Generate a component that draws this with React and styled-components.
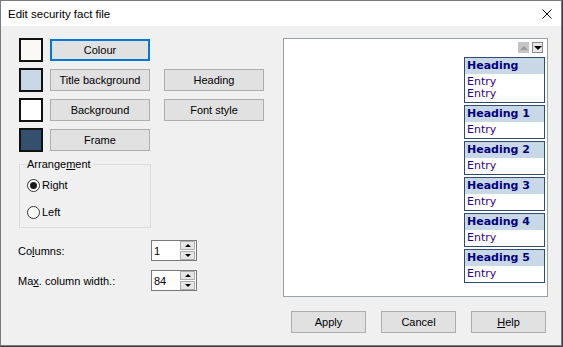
import React from 'react';
import styled, { createGlobalStyle } from 'styled-components';

const GlobalStyle = createGlobalStyle`
  html, body {
    margin: 0;
    padding: 0;
    background: #3a3d48;
  }
  body {
    font-family: "Liberation Sans", Arial, sans-serif;
    font-size: 11px;
    color: #000;
  }
`;

const Window = styled.div`
  width: 560px;
  height: 344px;
  border: 1px solid #7b7b7b;
  background: #f0f0f0;
  display: flex;
  flex-direction: column;
`;

const TitleBar = styled.div`
  height: 25px;
  flex: none;
  background: #fff;
  display: flex;
  align-items: center;
  justify-content: space-between;
  padding: 0 9px 0 7px;
  font-size: 11.5px;
`;

const CloseIcon = () => (
  <svg width="10" height="10" viewBox="0 0 10 10">
    <path d="M0.5 0.5 L9.5 9.5 M9.5 0.5 L0.5 9.5" stroke="#111" strokeWidth="1" />
  </svg>
);

const Body = styled.div`
  flex: 1;
  display: flex;
  padding: 12px 0 0 18px;
`;

const LeftCol = styled.div`
  width: 246px;
  display: flex;
  flex-direction: column;
`;

const RightCol = styled.div`
  width: 265px;
  margin-left: 18px;
  display: flex;
  flex-direction: column;
`;

const SwatchRows = styled.div`
  display: flex;
  flex-direction: column;
  gap: 6px;
`;

const SwatchRow = styled.div`
  display: flex;
  align-items: center;
  height: 24px;
`;

const Swatch = styled.div`
  width: 24px;
  height: 24px;
  box-sizing: border-box;
  border: 2px solid #111;
  background: ${({ color }) => color};
  margin-right: 7px;
`;

const Button = styled.button`
  width: ${({ wide }) => (wide ? '100px' : '75px')};
  height: 22px;
  box-sizing: border-box;
  padding: 0;
  margin: 0;
  margin-left: ${({ gapLeft }) => gapLeft || 0}px;
  background: #e1e1e1;
  border: ${({ focused }) => (focused ? '2px solid #0078d7' : '1px solid #adadad')};
  font-family: "Liberation Sans", Arial, sans-serif;
  font-size: 11px;
  color: #000;
`;

const Group = styled.fieldset`
  margin: 6px 0 0 0;
  width: 132px;
  box-sizing: border-box;
  padding: 0 0 7px 7px;
  border: 1px solid #dcdcdc;
`;

const Legend = styled.legend`
  padding: 0 2px 0 0;
  line-height: 13px;
`;

const RadioList = styled.div`
  display: flex;
  flex-direction: column;
  gap: 11px;
  padding-top: 6px;
`;

const RadioRow = styled.label`
  display: flex;
  align-items: center;
  height: 16px;
  gap: 2px;
`;

const RadioCircle = styled.span`
  width: 13px;
  height: 13px;
  box-sizing: border-box;
  border-radius: 50%;
  border: 1px solid #333;
  background: #fff;
  display: flex;
  align-items: center;
  justify-content: center;

  &::after {
    content: '';
    width: 7px;
    height: 7px;
    border-radius: 50%;
    background: ${({ checked }) => (checked ? '#1a1a1a' : 'transparent')};
  }
`;

const SpinRows = styled.div`
  display: flex;
  flex-direction: column;
  gap: 9px;
  margin-top: 12px;
`;

const SpinRow = styled.div`
  display: flex;
  align-items: center;
  height: 21px;
  margin-left: -1px;
`;

const SpinLabel = styled.span`
  width: 133px;
`;

const SpinBox = styled.div`
  width: 46px;
  height: 21px;
  box-sizing: border-box;
  border: 1px solid #7a7a7a;
  background: #fff;
  display: flex;
  align-items: center;
  padding: 0 1px 0 2px;
`;

const SpinValue = styled.span`
  flex: 1;
`;

const SpinArrows = styled.div`
  width: 15px;
  display: flex;
  flex-direction: column;
  gap: 1px;
`;

const SpinArrow = styled.div`
  height: 9px;
  box-sizing: border-box;
  border: 1px solid #adadad;
  background: #e5e5e5;
  display: flex;
  align-items: center;
  justify-content: center;

  &::after {
    content: '';
    border-left: 3px solid transparent;
    border-right: 3px solid transparent;
    ${({ down }) => (down ? 'border-top: 3px solid #000;' : 'border-bottom: 3px solid #000;')}
  }
`;

const Underline = styled.span`
  text-decoration: underline;
`;

const Preview = styled.div`
  width: 265px;
  height: 259px;
  box-sizing: border-box;
  border: 1px solid #9aa3ab;
  background: #fff;
  display: flex;
  flex-direction: column;
  align-items: flex-end;
  padding: 3px 2px 0 0;
`;

const ScrollArrows = styled.div`
  display: flex;
  gap: 3px;
  margin-right: 2px;
`;

const ScrollArrow = styled.div`
  width: 11px;
  height: 11px;
  box-sizing: border-box;
  border: 1px solid ${({ disabled }) => (disabled ? '#c4c4c4' : '#8a8a8a')};
  background: ${({ disabled }) => (disabled ? '#c4c4c4' : '#e9e9e9')};
  display: flex;
  align-items: center;
  justify-content: center;

  &::after {
    content: '';
    border-left: 4px solid transparent;
    border-right: 4px solid transparent;
    ${({ down, disabled }) =>
      down
        ? `border-top: 4px solid ${disabled ? '#9c9c9c' : '#000'};`
        : `border-bottom: 4px solid ${disabled ? '#9c9c9c' : '#000'};`}
  }
`;

const Cards = styled.div`
  display: flex;
  flex-direction: column;
  gap: 2px;
  margin-top: 4px;
`;

const Card = styled.div`
  width: 81px;
  box-sizing: border-box;
  border: 1px solid #2f4b70;
  font-family: "DejaVu Sans", Verdana, sans-serif;
  font-size: 11px;
`;

const CardHeading = styled.div`
  height: 16px;
  line-height: 16px;
  background: #c8d8e6;
  color: #000080;
  font-weight: bold;
  padding-left: 2px;
`;

const CardBody = styled.div`
  padding: 2px 2px 2px;
  line-height: 12px;
  color: #2c0094;
`;

const Footer = styled.div`
  display: flex;
  justify-content: flex-end;
  gap: 15px;
  padding-right: 2px;
  margin-top: 14px;
`;

const cards = [
  { title: 'Heading', entries: ['Entry', 'Entry'] },
  { title: 'Heading 1', entries: ['Entry'] },
  { title: 'Heading 2', entries: ['Entry'] },
  { title: 'Heading 3', entries: ['Entry'] },
  { title: 'Heading 4', entries: ['Entry'] },
  { title: 'Heading 5', entries: ['Entry'] },
];

const App = () => (
  <>
    <GlobalStyle />
    <Window>
      <TitleBar>
        <span>Edit security fact file</span>
        <CloseIcon />
      </TitleBar>
      <Body>
        <LeftCol>
          <SwatchRows>
            <SwatchRow>
              <Swatch color="#faf9f6" />
              <Button wide focused>Colour</Button>
            </SwatchRow>
            <SwatchRow>
              <Swatch color="#c8d8e6" />
              <Button wide>Title background</Button>
              <Button wide gapLeft={14}>Heading</Button>
            </SwatchRow>
            <SwatchRow>
              <Swatch color="#ffffff" />
              <Button wide>Background</Button>
              <Button wide gapLeft={14}>Font style</Button>
            </SwatchRow>
            <SwatchRow>
              <Swatch color="#34506f" />
              <Button wide>Frame</Button>
            </SwatchRow>
          </SwatchRows>

          <Group>
            <Legend>
              Arrange<Underline>m</Underline>ent
            </Legend>
            <RadioList>
              <RadioRow>
                <RadioCircle checked />
                Right
              </RadioRow>
              <RadioRow>
                <RadioCircle />
                Left
              </RadioRow>
            </RadioList>
          </Group>

          <SpinRows>
            <SpinRow>
              <SpinLabel>
                Co<Underline>l</Underline>umns:
              </SpinLabel>
              <SpinBox>
                <SpinValue>1</SpinValue>
                <SpinArrows>
                  <SpinArrow />
                  <SpinArrow down />
                </SpinArrows>
              </SpinBox>
            </SpinRow>
            <SpinRow>
              <SpinLabel>
                Ma<Underline>x</Underline>. column width.:
              </SpinLabel>
              <SpinBox>
                <SpinValue>84</SpinValue>
                <SpinArrows>
                  <SpinArrow />
                  <SpinArrow down />
                </SpinArrows>
              </SpinBox>
            </SpinRow>
          </SpinRows>
        </LeftCol>

        <RightCol>
          <Preview>
            <ScrollArrows>
              <ScrollArrow disabled />
              <ScrollArrow down />
            </ScrollArrows>
            <Cards>
              {cards.map((card) => (
                <Card key={card.title}>
                  <CardHeading>{card.title}</CardHeading>
                  <CardBody>
                    {card.entries.map((entry, i) => (
                      <div key={i}>{entry}</div>
                    ))}
                  </CardBody>
                </Card>
              ))}
            </Cards>
          </Preview>
          <Footer>
            <Button>Apply</Button>
            <Button>Cancel</Button>
            <Button>
              <Underline>H</Underline>elp
            </Button>
          </Footer>
        </RightCol>
      </Body>
    </Window>
  </>
);

export default App;
